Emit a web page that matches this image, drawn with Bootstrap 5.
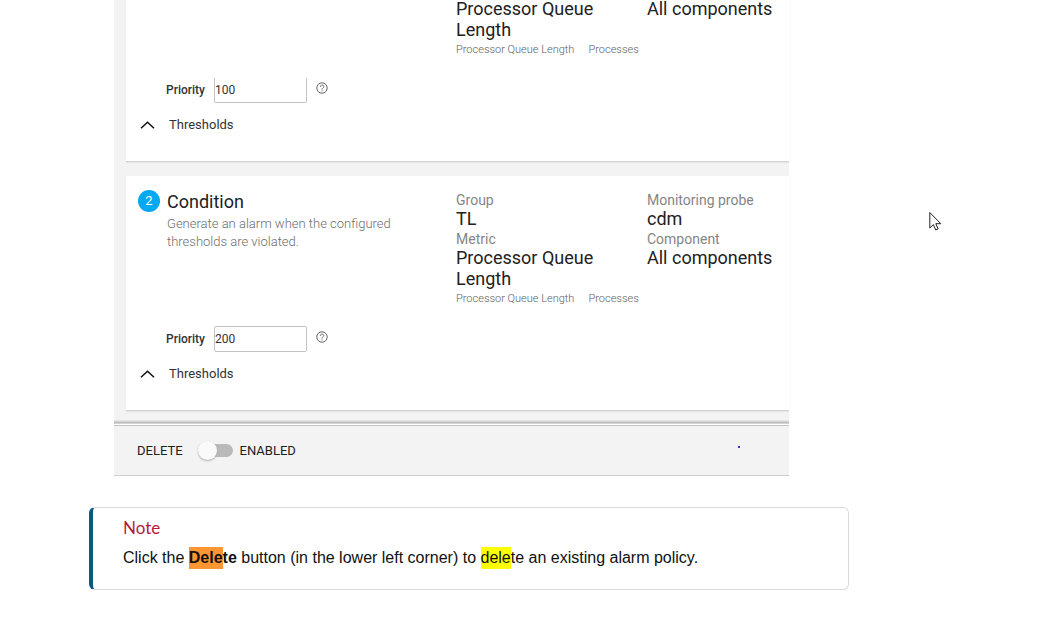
<!DOCTYPE html>
<html lang="en">
<head>
<meta charset="utf-8">
<meta name="viewport" content="width=device-width, initial-scale=1">
<title>Alarm policy</title>
<link href="https://cdn.jsdelivr.net/npm/bootstrap@5.3.0/dist/css/bootstrap.min.css" rel="stylesheet">
<style>
body { font-family: Roboto, sans-serif; color: #212121; background: #fff; overflow-x: hidden; }
.doc { max-width: 849px; padding-left: 89px; }
.editor { margin: 0 60px 0 25px; background: #f3f3f3; }
.conditions { padding-left: 12px; }
.condition-panel { background: #fff; border-bottom: 1px solid #d4d4d4; box-shadow: 0 1px 1px #e6e6e6; padding: 15px 0 27px 12px; }
.condition-panel.scrolled { padding-top: 0; }
.scrolled .facts { margin-top: -2px; }
.condition-panel + .condition-panel { margin-top: 14px; }
.col-title { flex: 0 0 318px; }
.col-metric { flex: 0 0 191px; }
.step { width: 22px; height: 22px; background: #03a9f0; color: #fff; font-size: 13px; line-height: 22px; margin: -1px 7px 0 0; }
.title-text, .fact-value { font-size: 18px; line-height: 21px; font-weight: 400; margin: 0; }
.title-text { line-height: 22px; }
.fact-value { margin-bottom: 1px; }
.hint { font-size: 13px; line-height: 18px; color: #6e6e6e; font-weight: 300; margin: 2px 0 0; max-width: 230px; }
.fact-label { font-size: 14px; line-height: 19px; margin-bottom: -2px; font-weight: 400; color: #858585; }
.fact-note { font-size: 11px; line-height: 16px; color: #606060; font-weight: 300; gap: 14px; padding-top: 1px; }
.priority-row { margin-top: 19px; padding-left: 28px; font-size: 12px; height: 26px; }
.priority-row label { width: 48px; font-weight: 500; color: #333; }
.priority-row input { width: 93px; height: 26px; padding: 0; border: 1px solid #c3c3c3; border-radius: 2px; font-size: 12px; color: #333; }
.scrolled input { border-top-color: transparent; }
.help { margin: 0 0 4px 9px; line-height: 0; }
.toggle-row { font-size: 13px; line-height: 18px; margin-top: 13px; gap: 14px; padding-left: 2px; color: #333; }
.seam { height: 5px; margin-top: 9px; background: linear-gradient(#f0f0f0, #b9b9b9 70%, #e4e4e4); border-bottom: 1px solid #fff; }
.actions { height: 51px; padding-left: 23px; border-top: 1px solid #c4c4c4; border-bottom: 1px solid #cdcdcd; font-size: 13px; }
.enable { margin: 0 7px 0 16px; }
.enable input { appearance: none; width: 34px; height: 13px; margin: 0; border-radius: 7px; background: #b9b9b9; display: block; }
.enable input::before { content: ""; display: block; width: 19px; height: 19px; border-radius: 50%; background: #fafafa; box-shadow: 0 1px 2px #aaa; transform: translate(-1px, -3px); }
.speck { width: 2px; height: 2px; background: #3c34c4; margin: 0 49px 8px auto; }
.note-box { margin-top: 31px; border: 1px solid #d9d9d9; border-left: 4px solid #0a5a80; border-radius: 6px; padding: 9px 30px 19px; color: #111; }
.note-box h2 { font-family: Lato, sans-serif; font-size: 17px; font-weight: 400; line-height: 22px; color: #b5173f; margin: 0 0 7px; }
.note-box p { font-family: "Liberation Sans", sans-serif; font-size: 16px; line-height: 24px; margin: 0; }
.hit { background: #ff0; color: inherit; padding: 2px 0 3px; }
.hit-current { background: #ff9632; }
.pointer { left: 929px; top: 211px; }
</style>
</head>
<body>
<main class="doc">
  <section class="editor" aria-label="Policy conditions">
    <div class="conditions d-flex flex-column">
      <article class="condition-panel scrolled">
        <div class="d-flex facts">
          <div class="col-title"></div>
          <div class="col-metric">
            <div class="fact-value pe-5">Processor Queue Length</div>
            <div class="fact-note d-flex text-nowrap"><span>Processor Queue Length</span><span>Processes</span></div>
          </div>
          <div class="fact-value">All components</div>
        </div>
        <div class="priority-row d-flex align-items-center">
          <label for="p1">Priority</label><input id="p1" type="text" value="100">
          <span class="help"><svg width="12" height="12" viewBox="0 0 12 12" fill="none" stroke="#666"><circle cx="6" cy="6" r="5.2"/><path d="M4.3 4.9c0-2.4 3.5-2.4 3.5-.2C7.800 5.900 6 6 6 7.500M6 8.400v1"/></svg></span>
        </div>
        <div class="toggle-row d-flex align-items-center"><svg width="15" height="8" viewBox="0 0 15 8" fill="none" stroke="#111" stroke-width="1.500"><path d="M1 7.200 7.500 1.200 14 7.200"/></svg><span>Thresholds</span></div>
      </article>
      <article class="condition-panel">
        <div class="d-flex">
          <div class="col-title d-flex align-items-start">
            <span class="step rounded-circle text-center flex-shrink-0">2</span>
            <div><h1 class="title-text">Condition</h1><p class="hint">Generate an alarm when the configured thresholds are violated.</p></div>
          </div>
          <div class="col-metric">
            <div class="fact-label">Group</div><div class="fact-value">TL</div>
            <div class="fact-label">Metric</div><div class="fact-value pe-5">Processor Queue Length</div>
            <div class="fact-note d-flex text-nowrap"><span>Processor Queue Length</span><span>Processes</span></div>
          </div>
          <div>
            <div class="fact-label">Monitoring probe</div><div class="fact-value">cdm</div>
            <div class="fact-label">Component</div><div class="fact-value">All components</div>
          </div>
        </div>
        <div class="priority-row d-flex align-items-center">
          <label for="p2">Priority</label><input id="p2" type="text" value="200">
          <span class="help"><svg width="12" height="12" viewBox="0 0 12 12" fill="none" stroke="#666"><circle cx="6" cy="6" r="5.2"/><path d="M4.3 4.9c0-2.4 3.5-2.4 3.5-.2C7.800 5.900 6 6 6 7.500M6 8.400v1"/></svg></span>
        </div>
        <div class="toggle-row d-flex align-items-center"><svg width="15" height="8" viewBox="0 0 15 8" fill="none" stroke="#111" stroke-width="1.500"><path d="M1 7.200 7.500 1.200 14 7.200"/></svg><span>Thresholds</span></div>
      </article>
    </div>
    <div class="seam"></div>
    <div class="actions d-flex align-items-center">
      <button type="button" class="border-0 bg-transparent p-0 text-reset">DELETE</button>
      <span class="enable"><input id="enabled" type="checkbox" role="switch"></span>
      <label for="enabled">ENABLED</label>
      <span class="speck"></span>
    </div>
  </section>
  <aside class="note-box">
    <h2>Note</h2>
    <p>Click the <b><mark class="hit hit-current">Dele</mark>te</b> button (in the lower left corner) to <mark class="hit">dele</mark>te an existing alarm policy.</p>
  </aside>
</main>
<svg class="pointer position-absolute" width="13" height="21" viewBox="0 0 13 21" fill="#fff" stroke="#222" stroke-width="1"><path d="M.8 1.500V17l3.600-3.400 2.300 5.400 2.400-1-2.300-5.300h5Z"/></svg>
<script src="https://cdn.jsdelivr.net/npm/bootstrap@5.3.0/dist/js/bootstrap.bundle.min.js"></script>
</body>
</html>
